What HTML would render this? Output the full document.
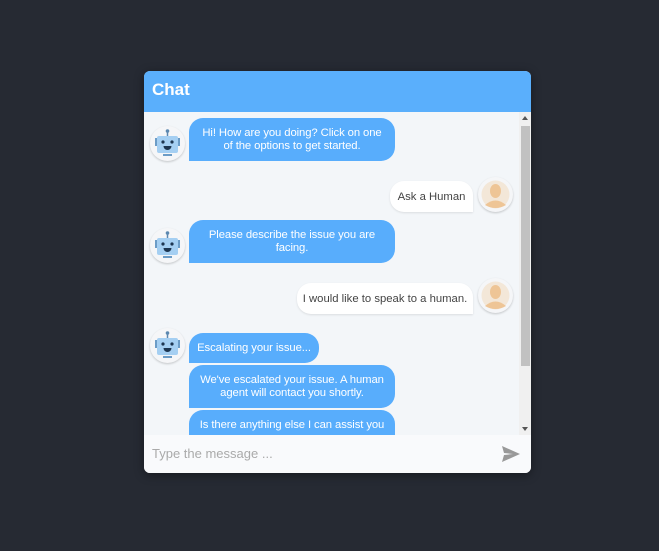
<!DOCTYPE html>
<html><head><style>
body{margin:0;width:659px;height:551px;background:#262a33;font-family:"Liberation Sans",Arial,sans-serif;position:relative;overflow:hidden}
.box{position:absolute;left:144px;top:71px;width:387px;height:402px;background:#f3f6f9;border-radius:6px;overflow:hidden;box-shadow:0 2px 10px rgba(0,0,0,.4)}
.hdr{position:absolute;left:0;top:0;width:100%;height:41px;background:#5aaffc;color:#fff;font-weight:bold;font-size:17px;line-height:38px;padding-left:8px;box-sizing:border-box}
.b{position:absolute;background:#58adfc;color:#fff;font-size:11.3px;line-height:12.5px;letter-spacing:-0.1px;text-align:center;border-radius:14px 14px 14px 0;box-sizing:border-box;display:flex;align-items:center;justify-content:center;padding:0 4px}
.u{position:absolute;background:#fff;color:#444;font-size:11.3px;border-radius:14px 14px 0 14px;box-shadow:0 1px 2px rgba(0,0,0,.1);display:flex;align-items:center;justify-content:center;white-space:nowrap}
.av{position:absolute;width:35px;height:35px;border-radius:50%;background:#f5f6f8;box-shadow:0 1px 2px rgba(0,0,0,.2)}
.sb{position:absolute;left:375px;top:41px;width:12px;height:323px;background:#f0f0f0}
.th{position:absolute;left:2px;top:14px;width:9px;height:240px;background:#c1c1c1}
.inp{position:absolute;left:0;top:364px;width:100%;height:38px;background:#f9fafc;color:#aaa;font-size:13px;line-height:38px;padding-left:8px;box-sizing:border-box}
</style></head><body>
<div class="box">
<div class="hdr">Chat</div>
<div class="sb"><div class="th"></div><div style="position:absolute;left:3px;top:4px;border:3px solid transparent;border-bottom:4px solid #555;border-top:0"></div><div style="position:absolute;left:3px;bottom:4px;border:3px solid transparent;border-top:4px solid #555;border-bottom:0"></div></div>

<svg width="0" height="0" style="position:absolute"><defs><g id="bot">
<line x1="17.5" y1="5" x2="17.5" y2="11" stroke="#5c88b0" stroke-width="1.5"/><circle cx="17.5" cy="5" r="1.8" fill="#5c88b0"/>
<rect x="5" y="12" width="2.5" height="8" fill="#6c9cc6"/><rect x="27.5" y="12" width="2.5" height="8" fill="#6c9cc6"/>
<rect x="7" y="10" width="21" height="17" rx="2" fill="#a5cff2"/>
<circle cx="13" cy="16" r="1.6" fill="#1d3550"/><circle cx="22" cy="16" r="1.6" fill="#1d3550"/>
<path d="M13.5 20 h8 a4 4 0 0 1 -8 0z" fill="#1d3550"/>
<rect x="13" y="28" width="9" height="2" fill="#6c9cc6"/></g>
<g id="usr"><circle cx="17.5" cy="17.5" r="14" fill="#f3e7d8"/><ellipse cx="17.5" cy="14" rx="5.5" ry="7" fill="#eec596"/><path d="M7 28 q10.5 -9 21 0 q-10.5 6 -21 0z" fill="#eec596"/></g></defs></svg>

<div class="av" style="left:6px;top:55px"><svg width="35" height="35"><use href="#bot"/></svg></div>
<div class="b" style="left:45px;top:47px;width:206px;height:43px">Hi! How are you doing? Click on one<br>of the options to get started.</div>

<div class="u" style="left:246px;top:110px;width:83px;height:31px">Ask a Human</div>
<div class="av" style="left:334px;top:106px"><svg width="35" height="35"><use href="#usr"/></svg></div>

<div class="av" style="left:6px;top:157px"><svg width="35" height="35"><use href="#bot"/></svg></div>
<div class="b" style="left:45px;top:149px;width:206px;height:43px">Please describe the issue you are<br>facing.</div>

<div class="u" style="left:153px;top:212px;width:176px;height:31px">I would like to speak to a human.</div>
<div class="av" style="left:334px;top:207px"><svg width="35" height="35"><use href="#usr"/></svg></div>

<div class="av" style="left:6px;top:257px"><svg width="35" height="35"><use href="#bot"/></svg></div>
<div class="b" style="left:45px;top:262px;width:130px;height:30px;white-space:nowrap">Escalating your issue...</div>
<div class="b" style="left:45px;top:294px;width:206px;height:43px">We've escalated your issue. A human<br>agent will contact you shortly.</div>
<div class="b" style="left:45px;top:339px;width:206px;height:43px;align-items:flex-start;padding-top:9px;white-space:nowrap">Is there anything else I can assist you</div>

<div class="inp">Type the message ...
<svg style="position:absolute;left:358px;top:11px" width="18" height="16" viewBox="0 0 18 16"><path d="M0 0 L18 8 L0 16 L2 9 L11 8 L2 7z" fill="#999"/></svg></div>
</div>
</body></html>
